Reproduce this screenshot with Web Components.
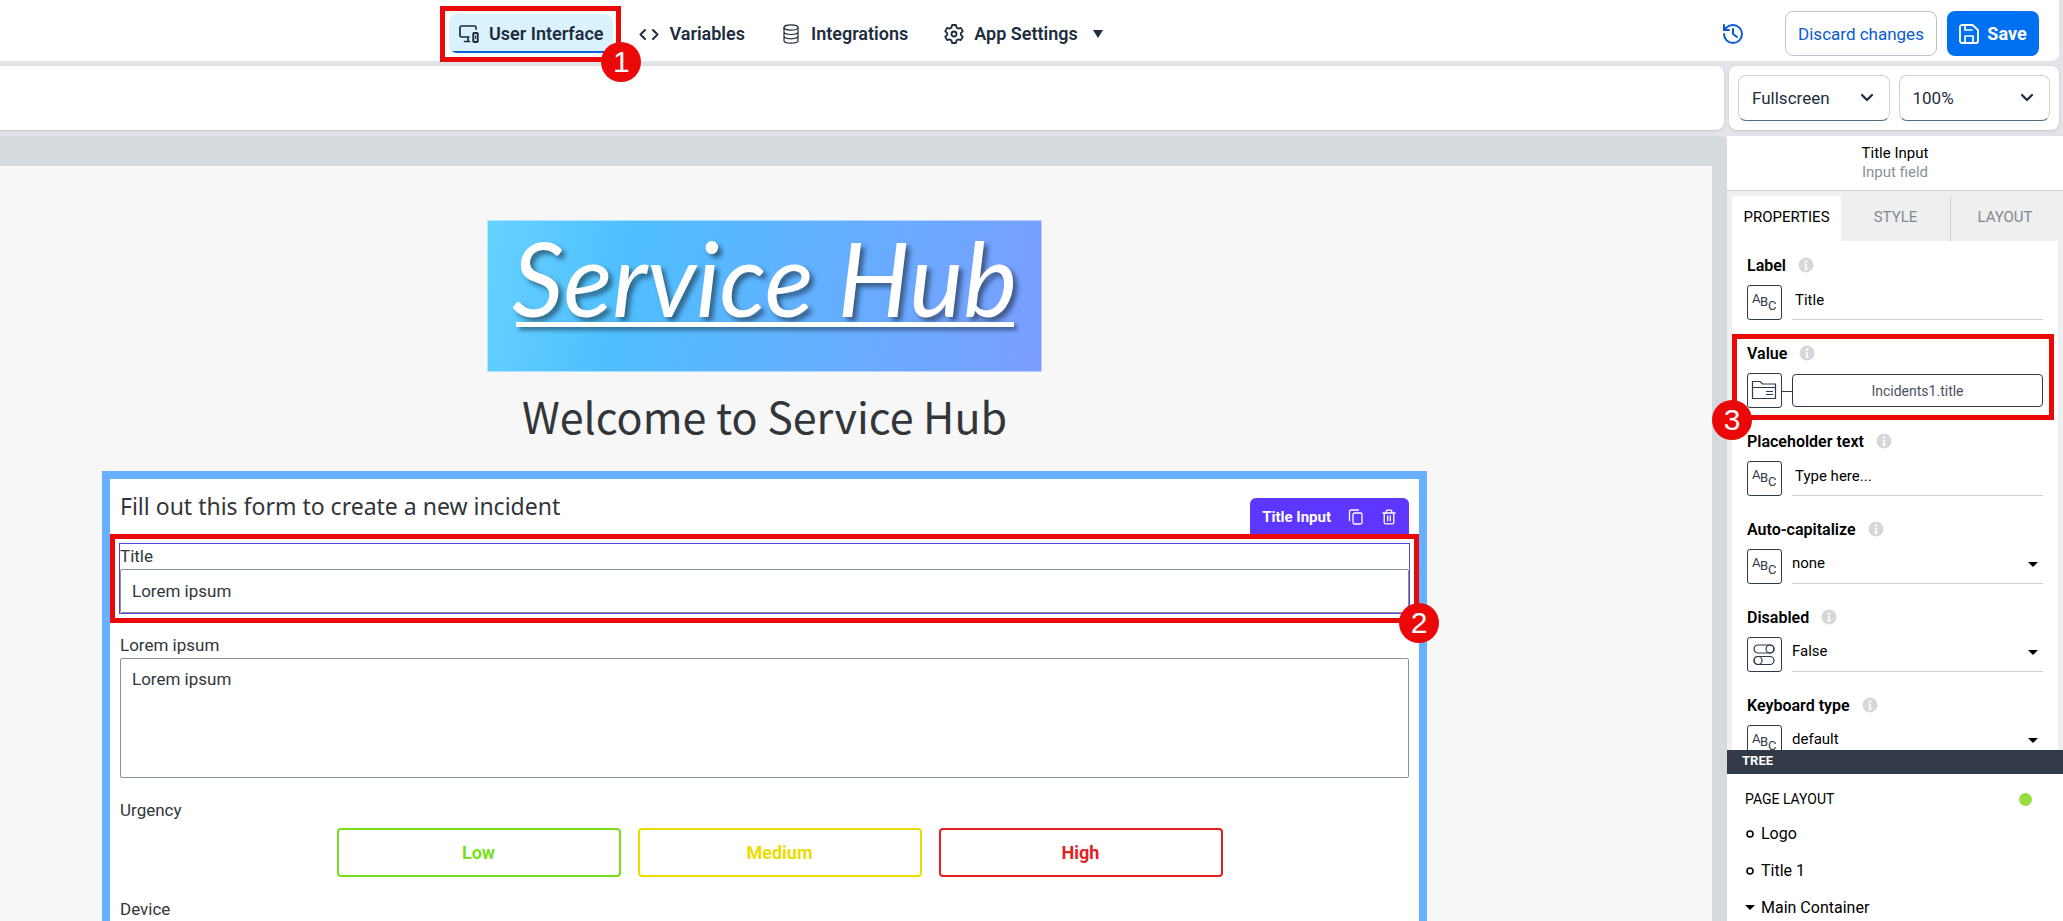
<!DOCTYPE html>
<html lang="en">
<head>
<meta charset="utf-8">
<title>Service Hub – User Interface</title>
<style>
  html, body { margin: 0; height: 100%; }
  body { background: #e3e4e9; color: #1d2d3e; font-family: Roboto, "Noto Sans", sans-serif; overflow: hidden; }
</style>
</head>
<body>
<app-shell>
  <app-header slot="header">
    <nav-tab icon="screens" active>User Interface<step-mark slot="mark" step="1" style="--mark-inset:-8px -8px -9px -9px"></step-mark></nav-tab>
    <nav-tab icon="code">Variables</nav-tab>
    <nav-tab icon="database">Integrations</nav-tab>
    <nav-tab icon="gear" menu>App Settings</nav-tab>
  </app-header>
  <div slot="toolbar"></div>
  <view-options slot="view">
    <view-select label="Screen size" value="Fullscreen"></view-select>
    <view-select label="Zoom" value="100%"></view-select>
  </view-options>
  <page-canvas slot="canvas">
    <brand-logo>Service Hub</brand-logo>
    <page-title>Welcome to Service Hub</page-title>
    <incident-form heading="Fill out this form to create a new incident">
      <form-field label="Title" value="Lorem ipsum" selected>
        <element-toolbar slot="toolbar">Title Input</element-toolbar>
        <step-mark slot="mark" step="2" style="--mark-inset:-10px"></step-mark>
      </form-field>
      <form-field label="Lorem ipsum" value="Lorem ipsum" multiline></form-field>
      <choice-group label="Urgency">
        <choice-button style="--tone:#76e01c">Low</choice-button>
        <choice-button style="--tone:#ecdc00">Medium</choice-button>
        <choice-button style="--tone:#e2201f">High</choice-button>
      </choice-group>
      <form-field label="Device" value=""></form-field>
    </incident-form>
  </page-canvas>
  <side-panel slot="panel">
    <property-row label="Label" kind="text" value="Title"></property-row>
    <property-row label="Value" kind="binding" icon="folder" value="Incidents1.title"><step-mark slot="mark" step="3" at="left" style="--mark-inset:-9px -11px -12px -15px"></step-mark></property-row>
    <property-row label="Placeholder text" kind="text" value="Type here..."></property-row>
    <property-row label="Auto-capitalize" kind="select" value="none"></property-row>
    <property-row label="Disabled" kind="select" icon="toggles" value="False"></property-row>
    <property-row label="Keyboard type" kind="select" value="default"></property-row>
    <layout-tree slot="tree">
      <tree-item>Logo</tree-item>
      <tree-item>Title 1</tree-item>
      <tree-item open>Main Container</tree-item>
    </layout-tree>
  </side-panel>
</app-shell>

<script>
const svg = (w, h, body, extra = '') =>
  `<svg width="${w}" height="${h}" viewBox="0 0 ${w} ${h}" fill="none" stroke="currentColor" stroke-width="2" stroke-linecap="round" stroke-linejoin="round" aria-hidden="true" ${extra}>${body}</svg>`;

const ICONS = {
  screens: svg(20, 20, '<path d="M17 5V3.5A1.5 1.5 0 0 0 15.5 2h-13A1.5 1.5 0 0 0 1 3.5v8A1.5 1.5 0 0 0 2.500 13H10M9 13v4M5.500 17.500H10.500" stroke-width="1.7"/><rect x="14.300" y="9" width="4.400" height="9" rx=".8" stroke-width="2"/><path d="M16.500 12v2.500" stroke-width="1"/>'),
  code: svg(20, 20, '<path d="M6 6L1.500 10.500L6 15M14 6L18.500 10.500L14 15"/>'),
  database: svg(20, 20, '<g stroke-width="1.200"><ellipse cx="10" cy="3.500" rx="7" ry="2.700"/><path d="M3 3.500v13c0 1.500 3.100 2.700 7 2.700s7-1.200 7-2.700v-13M3 7.800c0 1.500 3.100 2.700 7 2.700s7-1.200 7-2.700M3 12.100c0 1.500 3.100 2.700 7 2.700s7-1.200 7-2.700"/></g>'),
  gear: svg(20, 20, '<g stroke-width="1.800"><path d="M7.420 3.600L8.100 1H11.900L12.580 3.600L14.250 4.560L16.840 3.840L18.750 7.160L16.830 9.040V10.960L18.750 12.840L16.840 16.160L14.250 15.440L12.580 16.400L11.900 19H8.100L7.420 16.400L5.750 15.440L3.160 16.160L1.250 12.840L3.170 10.960V9.040L1.250 7.160L3.160 3.840L5.750 4.560Z"/><circle cx="10" cy="10" r="2.500"/></g>'),
  history: svg(24, 24, '<path d="M3 12a9 9 0 1 0 9-9 9.750 9.750 0 0 0-6.740 2.740L3 8"/><path d="M3 3v5h5M12 7v5l4 3"/>'),
  save: svg(20, 20, '<path d="M3 1H13.500L19 6V17A2 2 0 0 1 17 19H3A2 2 0 0 1 1 17V3A2 2 0 0 1 3 1Z" stroke-width="1.900"/><path d="M6 1.500V6H13M6 18.500V12H14V18.500" stroke-width="1.700"/>'),
  copy: svg(16, 16, '<rect x="5" y="4" width="9" height="11" rx="1.500" stroke-width="1.300"/><path d="M1.500 11.500V2.500A1.500 1.500 0 0 1 3 1H10.500" stroke-width="1.300"/>'),
  trash: svg(16, 16, '<path d="M2 4H14M5.200 4V2.200A1 1 0 0 1 6.200 1.200H9.800A1 1 0 0 1 10.800 2.200V4M3.200 4V13.500A1.300 1.300 0 0 0 4.500 14.800H11.500A1.300 1.300 0 0 0 12.800 13.500V4M6.700 7V11.800M9.300 7V11.800" stroke-width="1.300"/>'),
  chevron: svg(14, 10, '<path d="M2 2L7 7L12 2" stroke-width="2.200"/>'),
  caret: svg(10, 8, '<path d="M0 0H10L5 8Z" fill="currentColor" stroke="none"/>'),
  caretFlat: svg(10, 6, '<path d="M0 0H10L5 5Z" fill="currentColor" stroke="none"/>'),
  info: svg(16, 16, '<circle cx="8" cy="8" r="7.500" fill="#d5d7da" stroke="none"/><path d="M8 7.200V11.800M6.800 7.200H8M6.500 11.900H9.500" stroke="#fff" stroke-width="1.600" stroke-linecap="butt"/><circle cx="8" cy="4.400" r="1.200" fill="#fff" stroke="none"/>'),
  abc: svg(33, 33, '<g fill="currentColor" stroke="none" font-family="Roboto, sans-serif" font-size="13" font-weight="400"><text x="4" y="17">A</text><text x="12" y="20">B</text><text x="20" y="24">C</text></g>'),
  folder: svg(33, 33, '<path d="M4.500 24.500V7.500H12L14.500 10H27.500V24.500ZM4.500 13.500H27.500M18 17.500H25M18 20.500H25" stroke-width="1.200" stroke-linejoin="miter" stroke-linecap="butt"/>'),
  toggles: svg(33, 33, '<g stroke-width="1.200"><rect x="6" y="7" width="20" height="8" rx="4"/><circle cx="22" cy="11" r="4"/><rect x="6" y="18.500" width="20" height="8" rx="4"/><circle cx="10" cy="22.500" r="4"/></g>'),
  ring: svg(10, 10, '<circle cx="5" cy="5" r="3" stroke-width="1.600"/>'),
};

function define(name, css, html) {
  customElements.define(name, class extends HTMLElement {
    constructor() {
      super();
      const t = document.createElement('template');
      const body = typeof html === 'function' ? html(a => this.getAttribute(a) ?? '', a => this.hasAttribute(a)) : html;
      t.innerHTML = `<style>*{box-sizing:border-box}button,input,select,textarea{font:inherit;color:inherit;margin:0}svg{display:block;flex:none}${css}</style>${body}`;
      this.attachShadow({ mode: 'open' }).append(t.content.cloneNode(true));
    }
  });
}

/* Page frame: header, toolbar row, canvas and side panel */
define('app-shell', `
  :host { display: grid; height: 100vh; grid-template-columns: minmax(0, 1fr) 336px; grid-template-rows: 61px 64px minmax(0, 1fr); row-gap: 5px; }
  .header { grid-column: 1 / -1; margin-right: 4px; background: #fff; border-radius: 0 0 8px 0; }
  .toolbar, .view { background: #fff; box-shadow: 0 1px 3px #0002; }
  .toolbar { margin-right: 3px; border-radius: 0 8px 8px 0; }
  .view { margin: 0 4px 0 2px; border-radius: 8px; }
  .canvas, .panel { min-height: 0; display: grid; }
`, `
  <div class="header"><slot name="header"></slot></div>
  <div class="toolbar"><slot name="toolbar"></slot></div>
  <div class="view"><slot name="view"></slot></div>
  <main class="canvas"><slot name="canvas"></slot></main>
  <aside class="panel"><slot name="panel"></slot></aside>
`);

define('app-header', `
  :host { display: flex; align-items: center; height: 100%; padding: 0 20px 0 449px; }
  nav { display: flex; gap: 16px; padding-top: 6px; }
  .actions { display: flex; align-items: center; gap: 10px; margin-left: auto; padding-top: 6px; }
  button { display: flex; align-items: center; justify-content: center; height: 45px; border-radius: 8px; cursor: pointer; white-space: nowrap; }
  .history { border: 0; background: none; padding: 0; margin-right: 30px; color: #0a5bd3; }
  .discard { width: 152px; background: #fff; border: 1px solid #bcc3cf; color: #0a5bd3; font-size: 17px; padding: 0; }
  .save { width: 92px; gap: 8px; background: #0070f2; border: 0; color: #fff; font-size: 18px; font-weight: 700; padding: 0; }
`, `
  <nav aria-label="Main"><slot></slot></nav>
  <div class="actions">
    <button class="history" aria-label="History">${ICONS.history}</button>
    <button class="discard">Discard changes</button>
    <button class="save">${ICONS.save}<span>Save</span></button>
  </div>
`);

define('nav-tab', `
  :host { display: block; position: relative; }
  a { display: flex; align-items: center; gap: 10px; height: 39px; padding: 0 10px; border-radius: 8px; color: #1d2d3e; font-size: 18px; font-weight: 600; text-decoration: none; white-space: nowrap; overflow: hidden; }
  :host([active]) a { background: linear-gradient(#0a62d6, #0a62d6) bottom / 100% 2px no-repeat #daf1fe; }
  .menu { margin-left: 5px; }
`, (v, has) => `
  <a href="#">${ICONS[v('icon')]}<span><slot></slot></span>${has('menu') ? `<span class="menu">${ICONS.caret}</span>` : ''}</a>
  <slot name="mark"></slot>
`);

/* Numbered red frame laid over its parent */
define('step-mark', `
  :host { position: absolute; inset: var(--mark-inset); border: 5px solid #ea0808; z-index: 5; pointer-events: none; }
  span { position: absolute; bottom: -25px; right: -25px; width: 40px; height: 40px; border-radius: 50%; background: #ea0808; color: #fff; text-align: center; font: 30px/40px "Liberation Sans", Arial, sans-serif; }
  :host([at=left]) span { right: auto; left: -25px; }
`, v => `<span>${v('step')}</span>`);

define('view-options', `
  :host { display: grid; grid-template-columns: 1fr 1fr; gap: 9px; padding: 9px; }
`, `<slot></slot>`);

define('view-select', `
  :host { display: grid; align-items: center; font-size: 17px; color: #1d2d3e; }
  select, .arrow { grid-area: 1 / 1; }
  select { appearance: none; width: 100%; height: 46px; padding: 0 36px 0 13px; background: #fff; border: 1px solid #ccd2dc; border-bottom-color: #556b82; border-radius: 8px; }
  .arrow { justify-self: end; margin-right: 16px; pointer-events: none; }
`, v => `
  <select aria-label="${v('label')}"><option>${v('value')}</option></select>
  <span class="arrow">${ICONS.chevron}</span>
`);

define('page-canvas', `
  :host { display: grid; min-height: 0; margin-top: 1px; padding: 30px 15px 0 0; background: #d5dadd; border-radius: 0 8px 0 0; overflow: hidden; }
  .page { min-height: 0; overflow: hidden; background: #f7f7f7; padding: 54px 285px 0 102px; display: flex; flex-direction: column; align-items: center; }
`, `<div class="page"><slot></slot></div>`);

define('brand-logo', `
  :host { display: flex; flex: none; flex-direction: column; align-items: center; width: 555px; height: 152px; box-sizing: border-box; border: 1px solid #ffffff80; color: #fff;
    background: linear-gradient(102deg, #66d2ff, #4fbfff 25%, #7a9dff) border-box; }
  span { height: 101px; font: italic 400 102px/114px Lato, sans-serif; text-shadow: 4px 4px 5px #0007; white-space: nowrap; }
  i { display: block; width: 498px; height: 5px; background: #fff; box-shadow: 3px 3px 4px #0007; }
`, `<span><slot></slot></span><i></i>`);

define('page-title', `
  :host { display: block; flex: none; padding: 13px 0 26px; }
  h1 { margin: 0; color: #32363a; font: 400 43px/60px "Noto Sans CJK SC", "Noto Sans", sans-serif; white-space: nowrap; }
`, `<h1><slot></slot></h1>`);

define('incident-form', `
  :host { display: block; flex: none; align-self: stretch; background: #fff; border: 8px solid #66b0ff; padding: 10px; color: #32363a; }
  form { display: grid; gap: 20px; }
  h2 { margin: 0; font: 400 23px/35px "Noto Sans", sans-serif; }
`, v => `<form><h2>${v('heading')}</h2><slot></slot></form>`);

define('form-field', `
  :host { display: block; position: relative; font-size: 17px; }
  :host([selected]) { outline: 1px solid #5b3fe0; }
  label { display: block; line-height: 25px; }
  input, textarea { display: block; width: 100%; background: #fff; border: 1px solid #89919a; border-radius: 2px; resize: none; outline: 0; line-height: 22px; }
  input { height: 44px; padding: 0 11px; }
  textarea { height: 120px; padding: 9px 11px; }
`, (v, has) => `
  <label for="f">${v('label')}</label>
  ${has('multiline') ? `<textarea id="f">${v('value')}</textarea>` : `<input id="f" value="${v('value')}">`}
  <slot name="toolbar"></slot><slot name="mark"></slot>
`);

define('element-toolbar', `
  :host { position: absolute; right: 0; bottom: calc(100% + 8px); display: flex; align-items: center; gap: 17px; height: 38px; padding: 0 12px; box-sizing: border-box; border-radius: 6px 6px 0 0; background: #5d36ff; color: #fff; font-size: 15px; font-weight: 700; white-space: nowrap; }
  button { border: 0; padding: 0; background: none; }
`, `<span><slot></slot></span><button type="button" aria-label="Duplicate">${ICONS.copy}</button><button type="button" aria-label="Delete">${ICONS.trash}</button>`);

define('choice-group', `
  :host { display: block; font-size: 17px; }
  div { line-height: 25px; }
  .row { display: grid; grid-template-columns: repeat(3, minmax(0, 284px)); gap: 17px; justify-content: center; padding: 5px 0 0 30px; }
`, v => `<div id="l">${v('label')}</div><div class="row" role="group" aria-labelledby="l"><slot></slot></div>`);

define('choice-button', `
  :host { display: block; }
  button { width: 100%; height: 49px; background: #fff; border: 2px solid var(--tone); border-radius: 4px; color: var(--tone); font-size: 18px; font-weight: 700; }
`, `<button type="button"><slot></slot></button>`);

define('side-panel', `
  :host { display: grid; grid-template-rows: auto auto minmax(0, 1fr) 171px; min-height: 0; margin-top: 1px; background: #fff; color: #000; }
  header { padding: 8px 0; text-align: center; font-size: 15px; line-height: 19px; border-bottom: 1px solid #d0d3d6; }
  header small { display: block; font-size: 15px; color: #8b9198; }
  .tabs { display: grid; grid-template-columns: repeat(3, 1fr); padding: 5px 4px 0 5px; background: #edeff1; }
  .tabs button { height: 45px; padding: 0 0 4px; border: 0; background: none; color: #85898e; font-size: 15px; }
  .tabs button[aria-selected=true] { background: #fff; color: #000; border-radius: 3px 3px 0 0; }
  .tabs button:last-child { border-left: 1px solid #d0d3d6; }
  .props { display: grid; align-content: start; gap: 23px; min-height: 0; overflow-x: visible; overflow-y: clip; padding: 14px 15px 0; border: solid #edeff1; border-width: 0 5px; }
`, `
  <header>Title Input<small>Input field</small></header>
  <div class="tabs" role="tablist"><button role="tab" aria-selected="true">PROPERTIES</button><button role="tab">STYLE</button><button role="tab">LAYOUT</button></div>
  <div class="props"><slot></slot></div>
  <slot name="tree"></slot>
`);

define('property-row', `
  :host { display: grid; grid-template-columns: 35px minmax(0, 1fr); column-gap: 10px; row-gap: 10px; position: relative; }
  .head { grid-column: 1 / -1; display: flex; align-items: center; gap: 12px; height: 20px; font-size: 16px; font-weight: 600; }
  .kind { width: 35px; height: 35px; padding: 0; border: 1px solid #2f3a4a; border-radius: 3px; background: #fff; color: #2f3a4a; position: relative; }
  .control { display: grid; align-items: center; height: 35px; font-size: 15px; }
  .control > * { grid-area: 1 / 1; }
  input, select { appearance: none; width: 100%; height: 35px; padding: 0 3px 4px; background: none; border: 0; border-bottom: 1px solid #d0d3d6; border-radius: 0; outline: 0; }
  select { padding: 0 0 6px; }
  .arrow { justify-self: end; margin: 0 5px 4px 0; pointer-events: none; }
  .bound { height: 33px; border: 1px solid #2f3a4a; border-radius: 4px; background: #fff; color: #4a5260; font-size: 14px; }
  .linked::after { content: ""; position: absolute; left: 100%; top: 50%; width: 11px; border-top: 1px solid #2f3a4a; }
`, v => {
  const kind = v('kind'), value = v('value');
  const control = {
    text: `<input id="c" value="${value}">`,
    select: `<select id="c"><option>${value}</option></select><span class="arrow">${ICONS.caretFlat}</span>`,
    binding: `<button id="c" class="bound">${value}</button>`,
  }[kind];
  return `
  <div class="head"><label for="c">${v('label')}</label>${ICONS.info}</div>
  <button class="kind ${kind === 'binding' ? 'linked' : ''}" aria-label="${v('label')} source">${ICONS[v('icon') || 'abc']}</button>
  <div class="control">${control}</div>
  <slot name="mark"></slot>`;
});

define('layout-tree', `
  :host { display: block; overflow: hidden; background: #fff; position: relative; }
  h2 { margin: 0; height: 24px; padding-left: 15px; background: #323a48; color: #fff; font-size: 13px; line-height: 22px; font-weight: 700; }
  .head { display: flex; align-items: center; justify-content: space-between; height: 41px; padding: 9px 31px 0 18px; font-size: 14px; }
  .dot { width: 13px; height: 13px; border-radius: 50%; background: #98dd3f; }
`, `<h2>TREE</h2><div class="head"><span>PAGE LAYOUT</span><span class="dot"></span></div><slot></slot>`);

define('tree-item', `
  :host { display: flex; align-items: center; gap: 6px; height: 37px; padding-left: 18px; font-size: 16px; }
`, (v, has) => `${has('open') ? ICONS.caretFlat : ICONS.ring}<span><slot></slot></span>`);
</script>
</body>
</html>
